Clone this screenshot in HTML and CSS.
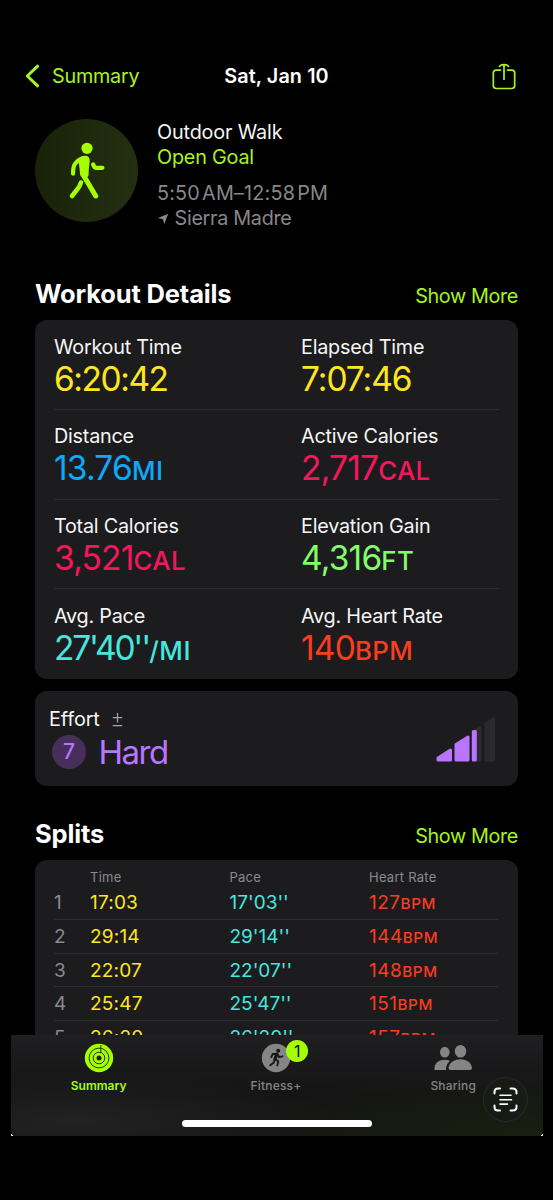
FILE: index.html
```html
<!DOCTYPE html>
<html lang="en">
<head>
<meta charset="utf-8">
<title>Outdoor Walk</title>
<link rel="stylesheet" href="styles.css">
</head>
<body>
<div class="screen">
  <header class="nav">
    <a class="back"><svg width="15" height="24" viewBox="0 0 15 24"><path d="M12.6 2.2 2.3 12l10.3 9.800" fill="none" stroke="currentColor" stroke-width="3" stroke-linecap="round" stroke-linejoin="round"/></svg><span>Summary</span></a>
    <h1>Sat, Jan 10</h1>
    <svg class="share" width="26" height="30" viewBox="0 0 26 30" fill="none" stroke="currentColor" stroke-width="1.700" stroke-linecap="round" stroke-linejoin="round"><path d="M9.500 8.100H5.200Q2.300 8.100 2.300 11v12.600q0 2.900 2.900 2.900h15.600q2.900 0 2.900-2.900V11q0-2.900-2.900-2.900h-4.300"/><path d="M13 17.200V2.800M8.500 4.400Q10 2.400 13 2.600q3-.2 4.500 1.800"/></svg>
  </header>

  <section class="hero">
    <div class="badge-circle">
      <svg width="38" height="58" viewBox="0 0 38 58"><circle cx="20" cy="6.300" r="5.600" fill="currentColor"/><path d="M11.500 18Q13.500 13.700 18 13.700q4.700 0 4.700 5l-.9 9q-.2 3-.2 5-.3 3-4 2.800-5-.3-4.600-4.500z" fill="currentColor"/><g fill="none" stroke="currentColor" stroke-linecap="round" stroke-linejoin="round"><path d="M16 16.300q-6 2-8.500 6.500-1.300 2.500-1.500 8.800" stroke-width="4.200"/><path d="M26.200 22.600q1.300 3.200 3.200 3.200h6" stroke-width="4.300"/><path d="M16.300 33 28.700 54" stroke-width="5"/><path d="M14 40.500q-.8 3-3.400 6.300L5 54" stroke-width="4.600"/></g></svg>
    </div>
    <div class="hero-text">
      <p class="kind">Outdoor Walk</p>
      <p class="goal">Open Goal</p>
      <p class="when">5:50<i></i>AM–12:58<i></i>PM</p>
      <p class="where"><svg width="12" height="12" viewBox="0 0 12 12"><path d="M11.200.8 7.300 11.200 5.900 6.300.8 5z" fill="currentColor"/></svg><span>Sierra Madre</span></p>
    </div>
  </section>

  <div class="section-head first"><h2>Workout Details</h2><a>Show More</a></div>
  <section class="card details">
    <div class="pair"><div><p class="label">Workout Time</p><p class="value yellow clock">6:20:42</p></div><div><p class="label">Elapsed Time</p><p class="value yellow clock-alt">7:07:46</p></div></div>
    <div class="pair"><div><p class="label">Distance</p><p class="value blue">13.76<small>MI</small></p></div><div><p class="label">Active Calories</p><p class="value pink">2,717<small>CAL</small></p></div></div>
    <div class="pair"><div><p class="label">Total Calories</p><p class="value pink">3,521<small>CAL</small></p></div><div><p class="label">Elevation Gain</p><p class="value green">4,316<small>FT</small></p></div></div>
    <div class="pair"><div><p class="label">Avg. Pace</p><p class="value cyan pace">27'40''<small>/MI</small></p></div><div><p class="label">Avg. Heart Rate</p><p class="value red">140<small>BPM</small></p></div></div>
  </section>

  <section class="card effort">
    <div>
      <p class="effort-label">Effort<svg width="11" height="15" viewBox="0 0 11 15"><path d="M.8 5.700h9.400M5.500 1v9.400M.8 13.600h9.400" fill="none" stroke="#a5a5aa" stroke-width="1.200"/></svg></p>
      <p class="effort-value"><b>7</b><span>Hard</span></p>
    </div>
    <svg class="bars" width="60" height="47" viewBox="0 0 60 47" stroke-linejoin="round" stroke-width="3"><g fill="#2b2b2f" stroke="#2b2b2f"><path d="M41 13.500l3-2v32.500H41z"/><path d="M50 7.500l7.500-5V44H50z"/></g><g fill="#b975ff" stroke="#b975ff"><path d="M2 44v-2L14.500 34v10z"/><path d="M20 44V28.500L32 21v23z"/><path d="M37.300 44V15.500h2V44z"/></g></svg>
  </section>

  <div class="section-head second"><h2>Splits</h2><a>Show More</a></div>
  <section class="card splits">
    <div class="row head"><span></span><span>Time</span><span>Pace</span><span>Heart Rate</span></div>
    <div class="row"><span>1</span><span>17:03</span><span>17'03''</span><span>127<small>BPM</small></span></div>
    <div class="row"><span>2</span><span>29:14</span><span>29'14''</span><span>144<small>BPM</small></span></div>
    <div class="row"><span>3</span><span>22:07</span><span>22'07''</span><span>148<small>BPM</small></span></div>
    <div class="row"><span>4</span><span>25:47</span><span>25'47''</span><span>151<small>BPM</small></span></div>
    <div class="row"><span>5</span><span>26:20</span><span>26'20''</span><span>157<small>BPM</small></span></div>
  </section>

  <nav class="tabs">
    <a class="tab active"><svg width="30" height="30" viewBox="0 0 30 30"><circle cx="15" cy="15" r="14.200" fill="#a6ff00"/><g fill="none" stroke="#26380a"><circle cx="15" cy="15" r="9.900" stroke-width="1"/><circle cx="15" cy="15" r="5.800" stroke-width="1"/><path d="M16.800 2v8" stroke-width="1"/></g><circle cx="15" cy="15" r="2.500" fill="#1c2410"/></svg><span>Summary</span></a>
    <a class="tab"><svg width="30" height="30" viewBox="0 0 30 30"><circle cx="15" cy="15" r="14.200" fill="#858585"/><circle cx="17.200" cy="7.800" r="2" fill="#171719"/><g fill="none" stroke="#171719" stroke-width="1.900" stroke-linecap="round" stroke-linejoin="round"><path d="M15.800 11.300 13.800 16l3.500 2.200-1 4.200M13.600 16.500 12.800 19.500 9.300 22.300M15.500 11l-3.700-.1-1.500 3.200M16.700 11.500l1.500 2.700 3.300-.9" /><path d="M15.700 11.200 14 16" stroke-width="3.200"/></g></svg><em>1</em><span>Fitness+</span></a>
    <a class="tab"><svg width="38" height="30" viewBox="0 0 38 30" fill="#858585"><ellipse cx="10.800" cy="9.200" rx="4.800" ry="5.400"/><path d="M.5 27V24.500C1 20 5 16.700 10.800 16.700q3 0 5.200 1.100-3.500 3-4 7-.1 1.300.3 2.200z"/><ellipse cx="26.500" cy="8.200" rx="5.700" ry="6.300"/><path d="M16.500 27q-2 0-2-2C15 20 20 16.200 26.500 16.200S37.500 20 38 25q0 2-2 2z"/></svg><span>Sharing</span></a>
    <button class="scan"><svg width="25" height="25" viewBox="0 0 25 25" fill="none" stroke="#fff" stroke-width="2" stroke-linecap="round"><path d="M1.500 6.500V5q0-3.500 3.500-3.500h2M17.500 1.500h2Q23.500 1.500 23.500 5v1.500M23.500 18.500V20q0 3.500-4 3.500h-2M7 23.500H5Q1.500 23.500 1.500 20v-1.500"/><path d="M7 8.300h11M7 12.700h11.500M7 17.100h7.500" stroke-width="1.600"/></svg></button>
    <i class="home-bar"></i>
  </nav>
</div>
</body>
</html>
```
FILE: styles.css
```css
* { box-sizing: border-box; }
body { margin: 0; background: #000; color: #f6f6f6; font-family: Inter, "Liberation Sans", sans-serif; }
h1, h2, p { margin: 0; }
svg { display: block; flex: none; }
small { font-size: inherit; }
.screen { position: relative; width: 553px; height: 1136px; overflow: hidden; padding: 56px 35px 0; }

.nav { height: 40px; margin: 0 -10px 23px; display: grid; grid-template-columns: 1fr auto 1fr; align-items: center; color: #a6f51c; }
.back { display: flex; align-items: center; gap: 12px; font-size: 19.800px; line-height: 24px; letter-spacing: -.25px; }
.nav h1 { color: #fff; font-size: 19.800px; font-weight: 600; line-height: 24px; letter-spacing: .1px; }
.share { justify-self: end; margin: 1px 11px 0 0; }

.hero { height: 103px; display: flex; gap: 19.500px; }
.badge-circle { width: 103px; height: 103px; margin-left: -.5px; border-radius: 50%; background: linear-gradient(90deg, #182207, #252f12); color: #a6ff00; display: grid; place-items: center; }
.hero-text { padding-top: 1px; font-size: 19.800px; line-height: 25px; white-space: nowrap; }
.kind { letter-spacing: -.15px; }
.goal { color: #a6f51c; margin-bottom: 11px; letter-spacing: -.2px; }
.when, .where { color: #87878c; }
.when { letter-spacing: .2px; }
.when i { display: inline-block; width: 2px; }
.where { display: flex; align-items: center; gap: 5.500px; letter-spacing: -.3px; }

.section-head { display: flex; justify-content: space-between; align-items: center; height: 40px; }
.first { margin-top: 52px; }
.second { margin-top: 28px; }
.section-head h2 { font-size: 25.500px; line-height: 32px; font-weight: 700; letter-spacing: -.15px; color: #fff; margin: -1px 0 0; }
.section-head a { font-size: 19.800px; line-height: 24px; letter-spacing: -.35px; color: #a6f51c; margin-top: 3px; }

.card { background: #1c1c1e; border-radius: 12px; }
.details { margin-top: 6px; height: 359px; padding: 0 19px; }
.pair { display: grid; grid-template-columns: 247px 1fr; height: 89.800px; padding-top: 14.600px; border-bottom: 1px solid #2d2d30; }
.pair:last-child { border-bottom: 0; }
.label { font-size: 19.800px; line-height: 25px; letter-spacing: -.23px; }
.value { font-size: 33.500px; line-height: 38px; letter-spacing: -.8px; white-space: nowrap; }
.value small { font-size: 25.800px; font-weight: 500; letter-spacing: .4px; }
.clock { letter-spacing: -1.450px; }
.clock-alt { letter-spacing: -1.050px; }
.pace { letter-spacing: -2.150px; }
.pace small { letter-spacing: .6px; }
.yellow { color: #ffe620; } .blue { color: #0fa8fb; } .pink { color: #f5175b; }
.green { color: #83fb6a; } .cyan { color: #46e6df; } .red { color: #fa3d20; }

.effort { margin-top: 12px; height: 95px; padding: 16px 22px 0 14px; display: flex; justify-content: space-between; }
.effort-label { display: flex; align-items: center; gap: 12px; font-size: 19.800px; line-height: 25px; letter-spacing: -.1px; }
.effort-value { display: flex; align-items: center; gap: 12.500px; height: 34px; margin: 3px 0 0 3px; color: #b975ff; }
.effort-value b { width: 34px; height: 34px; border-radius: 50%; background: #46305b; text-align: center; font-size: 21px; line-height: 34px; font-weight: 500; }
.effort-value span { font-size: 33px; letter-spacing: -1.500px; }
.bars { margin-top: 9px; }

.splits { margin-top: 6px; height: 300px; padding: 7px 20px 0 19px; }
.row { display: grid; grid-template-columns: 36px 139.500px 139.500px 1fr; height: 33.800px; line-height: 34px; font-size: 19px; border-bottom: 1px solid #2d2d30; }
.row.head { height: 19px; line-height: 20px; font-size: 13px; letter-spacing: .25px; border: 0; color: #8a8a8f; }
.row:not(.head) span:nth-child(1) { color: #8a8a8f; }
.row:not(.head) span:nth-child(2) { color: #ffe620; letter-spacing: .2px; }
.row:not(.head) span:nth-child(3) { color: #46e6df; }
.row:not(.head) span:nth-child(4) { color: #fa3d20; letter-spacing: .5px; }
.row small { font-size: 15.200px; font-weight: 500; letter-spacing: .6px; }

.tabs { position: absolute; left: 10.500px; top: 1035px; width: 532px; height: 101px; padding: 8px 0 0; display: grid; grid-template-columns: repeat(3, 177.300px); background: radial-gradient(ellipse at 100% 100%, #1a1f10 0, transparent 45%), radial-gradient(ellipse at 12% 85%, #222222 0, transparent 40%), linear-gradient(#1f1f21, #141415 60%); }
.tabs::before, .tabs::after { content: ""; position: absolute; bottom: 0; width: 3px; height: 3px; }
.tabs::before { left: 0; background: linear-gradient(45deg, #ddd 40%, transparent 41%); }
.tabs::after { right: 0; background: linear-gradient(-45deg, #ddd 40%, transparent 41%); }
.tab { position: relative; left: -.5px; display: flex; flex-direction: column; align-items: center; gap: 5px; color: #858585; font-size: 12px; line-height: 16px; font-weight: 500; letter-spacing: .2px; }
.tab.active { color: #a6ff00; font-weight: 600; letter-spacing: 0; }
.tab em { position: absolute; left: 99px; top: -3px; width: 22px; height: 22px; border-radius: 50%; background: #a6ff00; color: #111; font-style: normal; font-size: 16px; line-height: 22px; font-weight: 400; text-align: center; }
.scan { position: absolute; left: 472px; top: 42px; width: 45px; height: 45px; border: 1px solid #292b25; border-radius: 50%; background: #181a16; padding: 0; display: grid; place-items: center; }
.home-bar { position: absolute; left: 171px; top: 85px; width: 190px; height: 7px; border-radius: 4px; background: #fff; }
```
